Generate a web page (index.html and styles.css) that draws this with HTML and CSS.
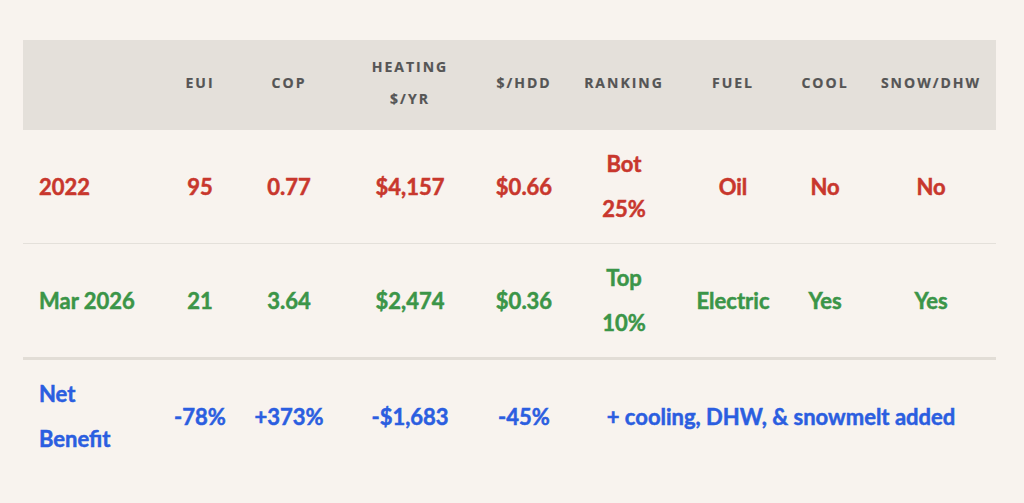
FILE: index.html
```html
<!DOCTYPE html>
<html lang="en">
<head>
<meta charset="utf-8">
<title>Energy comparison</title>
<link rel="stylesheet" href="styles.css">
</head>
<body>
<div class="wrap">
  <table class="cmp">
    <colgroup>
      <col class="c-label"><col class="c-eui"><col class="c-cop"><col class="c-heat"><col class="c-hdd"><col class="c-rank"><col class="c-fuel"><col class="c-cool"><col class="c-snow">
    </colgroup>
    <thead>
      <tr>
        <th></th>
        <th>EUI</th>
        <th>COP</th>
        <th>HEATING<br>$/YR</th>
        <th>$/HDD</th>
        <th>RANKING</th>
        <th>FUEL</th>
        <th>COOL</th>
        <th>SNOW/DHW</th>
      </tr>
    </thead>
    <tbody>
      <tr class="old">
        <td class="label">2022</td>
        <td>95</td>
        <td>0.77</td>
        <td>$4,157</td>
        <td>$0.66</td>
        <td>Bot<br>25%</td>
        <td>Oil</td>
        <td>No</td>
        <td>No</td>
      </tr>
      <tr class="new">
        <td class="label">Mar 2026</td>
        <td>21</td>
        <td>3.64</td>
        <td>$2,474</td>
        <td>$0.36</td>
        <td>Top<br>10%</td>
        <td>Electric</td>
        <td>Yes</td>
        <td>Yes</td>
      </tr>
      <tr class="net">
        <td class="label">Net<br>Benefit</td>
        <td>-78%</td>
        <td>+373%</td>
        <td>-$1,683</td>
        <td>-45%</td>
        <td colspan="4">+ cooling, DHW, &amp; snowmelt added</td>
      </tr>
    </tbody>
  </table>
</div>
</body>
</html>
```

FILE: styles.css
```css
html, body {
  margin: 0;
  padding: 0;
  background: #f8f3ee;
}
body {
  font-family: "Lato", "Liberation Sans", sans-serif;
}
.wrap {
  padding: 40px 28px 0 23px;
}
.cmp {
  width: 973px;
  border-collapse: collapse;
  table-layout: fixed;
}
.c-label { width: 137px; }
.c-eui { width: 80px; }
.c-cop { width: 98px; }
.c-heat { width: 144px; }
.c-hdd { width: 84px; }
.c-rank { width: 116px; }
.c-fuel { width: 102px; }
.c-cool { width: 82px; }
.c-snow { width: 130px; }

.cmp thead th {
  background: #e4e0da;
  color: #555555;
  font-family: "Open Sans", "Liberation Sans", sans-serif;
  font-weight: 700;
  font-size: 14px;
  letter-spacing: 2px;
  line-height: 32px;
  height: 86px;
  padding: 0 0 4px;
  text-align: center;
  vertical-align: middle;
  -webkit-text-stroke: 0.2px currentColor;
}
.cmp td {
  font-weight: 700;
  font-size: 22px;
  line-height: 45px;
  text-align: center;
  vertical-align: middle;
  padding: 11px 0 12px;
  -webkit-text-stroke: 0.5px currentColor;
}
.cmp td.label {
  text-align: left;
  padding-left: 16px;
}
.old td { color: #c8372d; border-bottom: 1px solid #e4e0da; }
.new td { color: #3b9548; border-bottom: 3px solid #e2ddd6; }
.net td { color: #2b5ee0; }
```
